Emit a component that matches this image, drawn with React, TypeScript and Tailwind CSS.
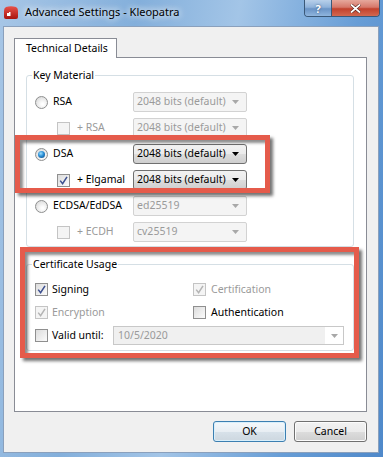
import React from "react";

function Radio({ checked }: { checked?: boolean }) {
  return (
    <span className="relative flex w-[13px] h-[13px] shrink-0 items-center justify-center rounded-full border border-[#8e8f8f] bg-[radial-gradient(circle_at_60%_65%,#ffffff_10%,#e9e9e9_55%,#cfcfcf_100%)]">
      {checked && (
        <span className="w-[7px] h-[7px] rounded-full bg-[radial-gradient(circle_at_40%_35%,#9fe0ff_0%,#2a8fd6_45%,#0b3f75_100%)]" />
      )}
    </span>
  );
}

function Check({ checked, disabled }: { checked?: boolean; disabled?: boolean }) {
  return (
    <span
      className={
        disabled
          ? "flex w-[13px] h-[13px] shrink-0 items-center justify-center border border-[#c4c4c4] bg-[#f4f4f4]"
          : "flex w-[13px] h-[13px] shrink-0 items-center justify-center border border-[#8f8f8f] bg-[linear-gradient(135deg,#dcdcdc,#fbfbfb)]"
      }
    >
      {checked && (
        <svg width="9" height="9" viewBox="0 0 9 9">
          <path
            d="M1.2 4.6 L3.6 7.6 L8 0.8"
            stroke={disabled ? "#b4b4b4" : "#3c4f8f"}
            strokeWidth="1.5"
            fill="none"
          />
        </svg>
      )}
    </span>
  );
}

function Combo({ text, enabled }: { text: string; enabled?: boolean }) {
  if (enabled) {
    return (
      <div className="flex h-[20px] w-[114px] items-center justify-between rounded-[3px] border border-[#707070] bg-[linear-gradient(#f2f2f2_0%,#ebebeb_50%,#dddddd_50%,#cfcfcf_100%)] pl-[3px] pr-[7px] text-black">
        <span>{text}</span>
        <svg width="7" height="4" viewBox="0 0 7 4">
          <path d="M0 0 L7 0 L3.5 4 Z" fill="#000" />
        </svg>
      </div>
    );
  }
  return (
    <div className="flex h-[20px] w-[114px] items-center justify-between rounded-[2px] border border-[#d2d2d2] bg-[#f4f4f4] pl-[3px] pr-[7px] text-[#9a9a9a]">
      <span>{text}</span>
      <svg width="7" height="4" viewBox="0 0 7 4">
        <path d="M0 0 L7 0 L3.5 4 Z" fill="#a8a8a8" />
      </svg>
    </div>
  );
}

export default function App() {
  return (
    <div className="relative flex h-[457px] w-[383px] flex-col overflow-hidden bg-[linear-gradient(100deg,#a7c6e6_0%,#83afdb_30%,#a3c5e7_52%,#679dd6_78%,#4f89ca_100%)] text-[10.5px] text-black [font-family:'Noto_Sans',sans-serif]">
      {/* Title bar */}
      <div className="flex h-[26px] items-start pl-[4px]">
        <svg className="mt-[6px]" width="14" height="13" viewBox="0 0 14 13">
          <defs>
            <linearGradient id="kg" x1="0" y1="0" x2="0" y2="1">
              <stop offset="0" stopColor="#e8524a" />
              <stop offset="1" stopColor="#a8140f" />
            </linearGradient>
          </defs>
          <path d="M2 1 Q7 -0.5 12 1 Q14 2 14 5 L14 11 Q14 13 12 13 L2 13 Q0 13 0 11 L0 5 Q0 2 2 1 Z" fill="url(#kg)" />
          <rect x="3" y="7" width="3.5" height="3" fill="#ffffff" />
          <rect x="5" y="6" width="1.5" height="1" fill="#ffffff" />
        </svg>
        <span className="ml-[7px] mt-[4px] leading-[16px] text-[11px] [text-shadow:0_0_6px_rgba(255,255,255,0.95),0_0_10px_rgba(255,255,255,0.8)]">
          Advanced Settings - Kleopatra
        </span>
        <div className="ml-auto mr-[3px] flex h-[17px] overflow-hidden rounded-b-[4px] border border-t-0 border-[#3a5878]">
          <div className="flex w-[27px] items-center justify-center border-r border-[#3a5878] bg-[linear-gradient(#b8d0ea_0%,#8fb2da_45%,#6a94c6_55%,#8fb5de_100%)] text-[11px] font-bold leading-none text-white [text-shadow:0_0_2px_#2a4a70]">
            ?
          </div>
          <div className="flex w-[47px] items-center justify-center bg-[linear-gradient(#e6a89c_0%,#d6786a_45%,#c2412d_55%,#d26850_100%)]">
            <svg width="11" height="9" viewBox="0 0 11 9">
              <path d="M1 0.5 L10 8.5 M10 0.5 L1 8.5" stroke="#4a1a14" strokeWidth="3" />
              <path d="M1 0.5 L10 8.5 M10 0.5 L1 8.5" stroke="#ffffff" strokeWidth="1.8" />
            </svg>
          </div>
        </div>
      </div>

      {/* Client area */}
      <div className="ml-[3px] mr-[4px] flex h-[427px] flex-col border border-[#8aa0bc] bg-[#f0f0f0] pl-[10px] pt-[11px]">
        <div className="relative z-10 -mb-px flex h-[20px] w-[103px] items-center border border-b-0 border-[#898c95] bg-white pl-[11px]">
          Technical Details
        </div>
        <div className="h-[355px] w-[353px] border border-[#898c95] bg-white pl-[11px] pt-[10px]">
          {/* Key Material */}
          <fieldset className="w-[328px] rounded-[3px] border border-[#d5dfe5] pb-[4px]">
            <legend className="ml-[5px] px-[1px] leading-[14px]">Key Material</legend>
            <div className="flex flex-col gap-[6px] pt-[10px]">
              <div className="flex h-[20px] items-center pl-[8px]">
                <div className="flex w-[98px] items-center gap-[5px]">
                  <Radio />
                  <span>RSA</span>
                </div>
                <Combo text="2048 bits (default)" />
              </div>
              <div className="flex h-[20px] items-center pl-[8px]">
                <div className="flex w-[98px] items-center gap-[7px] pl-[22px]">
                  <Check disabled />
                  <span className="text-[#9a9a9a]">+ RSA</span>
                </div>
                <Combo text="2048 bits (default)" />
              </div>
              <div className="flex h-[20px] items-center pl-[8px]">
                <div className="flex w-[98px] items-center gap-[5px]">
                  <Radio checked />
                  <span>DSA</span>
                </div>
                <Combo text="2048 bits (default)" enabled />
              </div>
              <div className="flex h-[20px] items-center pl-[8px]">
                <div className="flex w-[98px] items-center gap-[7px] pl-[22px]">
                  <Check checked />
                  <span>+ Elgamal</span>
                </div>
                <Combo text="2048 bits (default)" enabled />
              </div>
              <div className="flex h-[20px] items-center pl-[8px]">
                <div className="flex w-[98px] items-center gap-[5px]">
                  <Radio />
                  <span>ECDSA/EdDSA</span>
                </div>
                <Combo text="ed25519" />
              </div>
              <div className="flex h-[20px] items-center pl-[8px]">
                <div className="flex w-[98px] items-center gap-[7px] pl-[22px]">
                  <Check disabled />
                  <span className="text-[#9a9a9a]">+ ECDH</span>
                </div>
                <Combo text="cv25519" />
              </div>
            </div>
          </fieldset>

          {/* Certificate Usage */}
          <fieldset className="mt-[10px] w-[328px] rounded-[3px] border border-[#d5dfe5] pb-[5px]">
            <legend className="ml-[5px] px-[1px] leading-[14px]">Certificate Usage</legend>
            <div className="flex flex-col gap-[4px] pl-[8px] pt-[9px]">
              <div className="grid h-[19px] grid-cols-[158px_1fr] items-center">
                <div className="flex items-center gap-[4px]">
                  <Check checked />
                  <span>Signing</span>
                </div>
                <div className="flex items-center gap-[5px]">
                  <Check checked disabled />
                  <span className="text-[#9a9a9a]">Certification</span>
                </div>
              </div>
              <div className="grid h-[19px] grid-cols-[158px_1fr] items-center">
                <div className="flex items-center gap-[4px]">
                  <Check checked disabled />
                  <span className="text-[#9a9a9a]">Encryption</span>
                </div>
                <div className="flex items-center gap-[5px]">
                  <Check />
                  <span>Authentication</span>
                </div>
              </div>
              <div className="flex h-[19px] items-center">
                <div className="flex w-[78px] items-center gap-[4px]">
                  <Check />
                  <span>Valid until:</span>
                </div>
                <div className="flex h-[19px] w-[231px] items-stretch border border-[#c8c8c8] bg-white">
                  <div className="flex flex-1 items-center bg-[#f0f0f0] pl-[4px] text-[#9a9a9a]">10/5/2020</div>
                  <div className="flex w-[18px] items-center justify-center">
                    <svg width="7" height="4" viewBox="0 0 7 4">
                      <path d="M0 0 L7 0 L3.5 4 Z" fill="#a8a8a8" />
                    </svg>
                  </div>
                </div>
              </div>
            </div>
          </fieldset>
        </div>

        {/* Buttons */}
        <div className="mt-[9px] flex w-[353px] justify-end gap-[8px]">
          <button className="flex h-[21px] w-[73px] items-center justify-center rounded-[3px] border border-[#3c7fb1] bg-[linear-gradient(#f4f8fb_0%,#e8eef3_50%,#d8e2ea_50%,#cdd7df_100%)] shadow-[inset_0_0_0_1px_#d8effb]">
            OK
          </button>
          <button className="flex h-[21px] w-[73px] items-center justify-center rounded-[3px] border border-[#707070] bg-[linear-gradient(#f2f2f2_0%,#ebebeb_50%,#dddddd_50%,#cfcfcf_100%)] shadow-[inset_0_0_0_1px_#fcfcfc]">
            Cancel
          </button>
        </div>
      </div>

      {/* Annotation boxes */}
      <div className="pointer-events-none absolute left-[15px] top-[135px] h-[58px] w-[255px] border-[5px] border-[#e55b4b] shadow-[3px_3px_3px_rgba(0,0,0,0.55),inset_3px_3px_3px_rgba(0,0,0,0.45)]" />
      <div className="pointer-events-none absolute left-[20px] top-[247px] h-[111px] w-[339px] border-[5px] border-[#e55b4b] shadow-[3px_3px_3px_rgba(0,0,0,0.55),inset_3px_3px_3px_rgba(0,0,0,0.45)]" />
    </div>
  );
}
